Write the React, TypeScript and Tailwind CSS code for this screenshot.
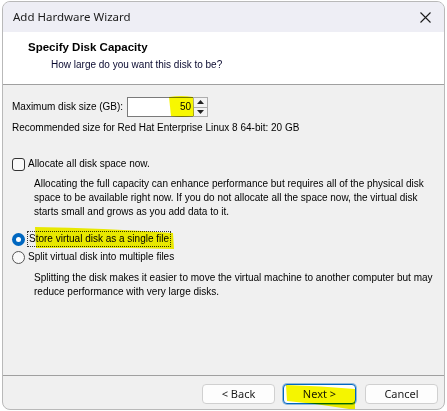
import React from "react";

const dlg = { fontFamily: '"Liberation Sans", Arial, sans-serif' };
const seg = { fontFamily: '"Noto Sans", "Open Sans", sans-serif' };

function Checkbox() {
  return <span className="w-[13px] h-[13px] rounded-[3px] border border-[#333] bg-[#f9f9f9] shrink-0" />;
}

function Radio({ checked }: { checked?: boolean }) {
  if (checked) {
    return (
      <span className="w-[13px] h-[13px] rounded-full bg-[#0067c0] flex items-center justify-center shrink-0">
        <span className="w-[5px] h-[5px] rounded-full bg-white" />
      </span>
    );
  }
  return <span className="w-[13px] h-[13px] rounded-full border border-[#555] bg-[#f9f9f9] shrink-0" />;
}

function Button({ label, focused }: { label: string; focused?: boolean }) {
  return (
    <button
      className={`w-[73px] h-[20px] rounded-[4px] bg-[#fdfdfd] text-[11px] text-[#1a1a1a] flex items-center justify-center ${
        focused ? "border border-[#0067c0] ring-1 ring-[#0067c0]/40" : "border border-[#d0d0d0]"
      }`}
      style={seg}
    >
      {label}
    </button>
  );
}

export default function App() {
  return (
    <div className="w-[447px] h-[411px] bg-white pl-[2px] pt-[1px]">
      <div className="relative w-[443px] h-[409px] flex flex-col rounded-[8px] border border-[#b9b9b9] overflow-hidden bg-[#f0f0f0]">
        {/* Title bar */}
        <div className="h-[30px] bg-[#eeeef5] flex items-center justify-between pl-[10px] pr-[13px]" style={seg}>
          <span className="text-[11.5px] text-[#1b1b1b]">Add Hardware Wizard</span>
          <svg width="11" height="11" viewBox="0 0 11 11">
            <path d="M0.5 0.5L10.5 10.5M10.5 0.5L0.5 10.5" stroke="#1b1b1b" strokeWidth="1.1" />
          </svg>
        </div>

        {/* Header */}
        <div className="h-[53px] bg-white border-b border-[#a0a0a0] pl-[25px] pt-[8px] text-[10px] text-black" style={dlg}>
          <div className="font-bold text-[11.5px] leading-[14px]">Specify Disk Capacity</div>
          <div className="pl-[23px] mt-[4px] leading-[14px] text-[#0a0a30]">How large do you want this disk to be?</div>
        </div>

        {/* Body */}
        <div className="flex-1 px-[9px] pt-[12px] text-[10px] leading-[14px] text-black" style={dlg}>
          <div className="flex items-center h-[20px]">
            <span className="w-[115px]">Maximum disk size (GB):</span>
            <div className="flex h-[20px]">
              <div className="w-[66px] bg-white border border-[#7a7a7a] border-r-0 flex items-center justify-end pr-[2px]">
                50
              </div>
              <div className="w-[15px] flex flex-col border border-[#adadad]">
                <div className="flex-1 flex items-center justify-center border-b border-[#adadad] bg-[#f3f3f3]">
                  <svg width="7" height="4" viewBox="0 0 7 4"><path d="M0 4L3.5 0L7 4Z" fill="#222" /></svg>
                </div>
                <div className="flex-1 flex items-center justify-center bg-[#f3f3f3]">
                  <svg width="7" height="4" viewBox="0 0 7 4"><path d="M0 0L3.5 4L7 0Z" fill="#222" /></svg>
                </div>
              </div>
            </div>
          </div>
          <div className="mt-[4px]">Recommended size for Red Hat Enterprise Linux 8 64-bit: 20 GB</div>

          <div className="mt-[22px] flex items-center gap-[3px]">
            <Checkbox />
            <span>Allocate all disk space now.</span>
          </div>
          <div className="pl-[22px] mt-[6px] w-[424px]">
            Allocating the full capacity can enhance performance but requires all of the physical disk space to be
            available right now. If you do not allocate all the space now, the virtual disk starts small and grows as
            you add data to it.
          </div>

          <div className="mt-[12px] flex items-center gap-[2px]">
            <Radio checked />
            <span className="border border-dotted border-[#333] px-[1px]">Store virtual disk as a single file</span>
          </div>
          <div className="mt-[3px] flex items-center gap-[3px]">
            <Radio />
            <span>Split virtual disk into multiple files</span>
          </div>
          <div className="pl-[22px] mt-[7px] w-[430px]">
            Splitting the disk makes it easier to move the virtual machine to another computer but may reduce
            performance with very large disks.
          </div>
        </div>

        {/* Footer */}
        <div className="h-[34px] border-t border-[#a0a0a0] flex items-start justify-end pt-[8px] pr-[6px]">
          <div className="flex gap-[8px]">
            <Button label="< Back" />
            <Button label="Next >" focused />
          </div>
          <div className="ml-[9px]">
            <Button label="Cancel" />
          </div>
        </div>

        {/* Highlighter marks */}
        <svg className="absolute inset-0 pointer-events-none mix-blend-multiply" width="443" height="409" viewBox="0 0 443 409">
          <path d="M166 95 Q178 93 190 95 L191 114 Q178 116 168 114 Z" fill="#f7f700" />
          <path d="M32 225 Q100 226 170 231 L171 247 Q100 245 33 246 Z" fill="#f7f700" />
          <path d="M283 383 Q318 384 352 387 L352 408 Q318 402 284 399 Z" fill="#f7f700" />
        </svg>
      </div>
    </div>
  );
}
